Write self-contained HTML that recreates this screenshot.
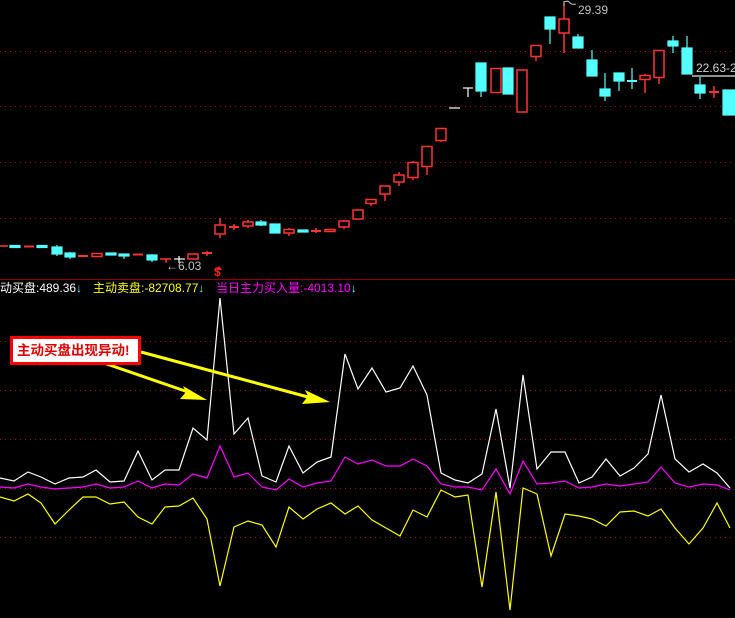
<!DOCTYPE html>
<html><head><meta charset="utf-8"><style>
html,body{margin:0;padding:0;background:#000;width:735px;height:618px;overflow:hidden}
svg{display:block}
text{font-family:"Liberation Sans","Noto Sans CJK SC",sans-serif}
</style></head><body>
<svg width="735" height="618" viewBox="0 0 735 618" xmlns="http://www.w3.org/2000/svg">
<g stroke="#a01010" stroke-width="1" stroke-dasharray="1 4">
<line x1="0" y1="51.5" x2="735" y2="51.5"/><line x1="0" y1="106.5" x2="735" y2="106.5"/>
<line x1="0" y1="162.5" x2="735" y2="162.5"/><line x1="0" y1="218.5" x2="735" y2="218.5"/>
<line x1="0" y1="341.5" x2="735" y2="341.5"/><line x1="0" y1="390.5" x2="735" y2="390.5"/>
<line x1="0" y1="439.5" x2="735" y2="439.5"/><line x1="0" y1="488.5" x2="735" y2="488.5"/>
<line x1="0" y1="537.5" x2="735" y2="537.5"/>
</g>
<line x1="0" y1="279.5" x2="735" y2="279.5" stroke="#900000"/>
<g stroke="#ff3232" stroke-width="1.5" fill="#000">
<line x1="-2" y1="246" x2="8" y2="246"/>
<line x1="24" y1="246.5" x2="34" y2="246.5" stroke-width="2"/>
<line x1="78" y1="256" x2="88" y2="256" stroke-width="2"/>
<rect x="92" y="253.5" width="10" height="3"/>
<line x1="133" y1="254.5" x2="143" y2="254.5" stroke-width="2"/>
<line x1="166" y1="259" x2="166" y2="263"/><line x1="160" y1="259" x2="171" y2="259"/>
<rect x="188" y="254" width="10" height="5"/>
<line x1="202" y1="253" x2="212" y2="253" stroke-width="2"/><line x1="207" y1="251" x2="207" y2="256"/>
<line x1="220" y1="218" x2="220" y2="238"/><rect x="215" y="225" width="10" height="9"/>
<line x1="229" y1="227" x2="239" y2="227" stroke-width="2"/><line x1="234" y1="224" x2="234" y2="230"/>
<line x1="248" y1="220" x2="248" y2="228"/><rect x="243" y="222" width="10" height="4"/>
<line x1="289" y1="228" x2="289" y2="236"/><rect x="284" y="229.5" width="10" height="3.5"/>
<line x1="311" y1="231" x2="321" y2="231" stroke-width="2"/><line x1="316" y1="228" x2="316" y2="233"/>
<rect x="325" y="229.5" width="10" height="2"/>
<line x1="344" y1="220" x2="344" y2="229"/><rect x="339" y="221" width="10" height="6"/>
<rect x="353" y="210" width="10" height="9"/>
<line x1="371" y1="204" x2="371" y2="206"/><rect x="366" y="199.5" width="10" height="4"/>
<line x1="385" y1="194" x2="385" y2="201"/><rect x="380" y="186" width="10" height="8"/>
<line x1="399" y1="172" x2="399" y2="186"/><rect x="394" y="175" width="10" height="7"/>
<line x1="413" y1="161" x2="413" y2="180"/><rect x="408" y="162.5" width="10" height="15"/>
<line x1="427" y1="166" x2="427" y2="175"/><rect x="422" y="146.5" width="10" height="20"/>
<line x1="441" y1="140" x2="441" y2="142"/><rect x="436" y="128.5" width="10" height="12"/>
<rect x="491" y="68.5" width="10" height="24"/>
<rect x="517" y="70" width="10" height="42"/>
<line x1="536" y1="56" x2="536" y2="61"/><rect x="531" y="45.5" width="10" height="11"/>
<line x1="564" y1="3" x2="564" y2="53"/><rect x="559" y="19" width="10" height="14"/>
<line x1="645" y1="74" x2="645" y2="93"/><rect x="640" y="75.5" width="10" height="4"/>
<line x1="659" y1="77" x2="659" y2="84"/><rect x="654" y="50.5" width="10" height="27"/>
<line x1="709" y1="92" x2="719" y2="92" stroke-width="2"/><line x1="714" y1="86" x2="714" y2="98"/>
</g>
<g fill="#54ffff" stroke="#54ffff" stroke-width="1.2">
<rect x="10" y="245.5" width="10" height="2"/>
<rect x="37" y="245.5" width="10" height="2"/>
<rect x="52" y="247" width="10" height="7"/><line x1="57" y1="245" x2="57" y2="256"/>
<rect x="65" y="253" width="10" height="4"/><line x1="70" y1="252" x2="70" y2="259"/>
<rect x="106" y="253" width="10" height="2"/>
<rect x="119" y="254" width="10" height="2"/><line x1="124" y1="256" x2="124" y2="259"/>
<rect x="147" y="255" width="10" height="5"/><line x1="152" y1="254" x2="152" y2="262"/>
<rect x="256" y="222" width="10" height="3"/><line x1="261" y1="220" x2="261" y2="226"/>
<rect x="270" y="224" width="10" height="9"/>
<rect x="298" y="230" width="10" height="2"/>
<rect x="476" y="63" width="10" height="28"/><line x1="481" y1="91" x2="481" y2="97"/>
<rect x="503" y="68" width="10" height="26"/>
<rect x="545" y="17" width="10" height="12"/><line x1="550" y1="29" x2="550" y2="44"/>
<rect x="573" y="37" width="10" height="11"/><line x1="578" y1="34" x2="578" y2="37"/>
<rect x="587" y="60" width="10" height="16"/><line x1="592" y1="50" x2="592" y2="60"/>
<rect x="600" y="89" width="10" height="7"/><line x1="605" y1="73" x2="605" y2="101"/>
<rect x="614" y="73" width="10" height="8"/><line x1="619" y1="81" x2="619" y2="91"/>
<line x1="627" y1="81" x2="637" y2="81" stroke-width="2"/><line x1="632" y1="68" x2="632" y2="89"/>
<rect x="668" y="41" width="10" height="5"/><line x1="673" y1="36" x2="673" y2="53"/>
<rect x="682" y="48" width="10" height="26"/><line x1="687" y1="36" x2="687" y2="48"/>
<rect x="695" y="85" width="10" height="8"/><line x1="700" y1="77" x2="700" y2="99"/>
<rect x="723" y="90" width="12" height="25"/>
</g>
<g stroke="#fff" stroke-width="1.2">
<line x1="174" y1="259" x2="185" y2="259"/><line x1="179" y1="256" x2="179" y2="263"/>
<line x1="449" y1="108" x2="460" y2="108"/>
<line x1="463" y1="88" x2="473" y2="88"/><line x1="468" y1="88" x2="468" y2="97"/>
</g>
<text x="166" y="270" fill="#c0c0c0" font-size="12">←6.03</text>
<text x="214" y="276" fill="#ff2020" font-size="12" font-weight="bold">$</text>
<path d="M216 270 L219 266 L222 270Z" fill="#ff2020"/>
<path d="M564 1 L564 6 M564 2 Q568 0 570 3 Q572 5 576 4" stroke="#c0c0c0" fill="none"/>
<text x="578" y="14" fill="#c0c0c0" font-size="12">29.39</text>
<text x="696" y="72" fill="#d0d0d0" font-size="12">22.63-2</text>
<line x1="692" y1="76" x2="735" y2="76" stroke="#909090" stroke-width="2"/>
<text x="0" y="292" font-size="12"><tspan fill="#fff">动买盘:489.36</tspan><tspan fill="#54ffff">↓</tspan></text>
<text x="93" y="292" font-size="12"><tspan fill="#ffff00">主动卖盘:-82708.77</tspan><tspan fill="#54ffff">↓</tspan></text>
<text x="216" y="292" font-size="12"><tspan fill="#ff00ff">当日主力买入量:-4013.10</tspan><tspan fill="#54ffff">↓</tspan></text>
<g fill="none" stroke-width="1.2">
<polyline stroke="#fff" points="0,478 14,481 28,472 41,477 55,484 69,478 83,477 96,470 110,482 124,481 138,451 152,480 165,470 179,470 193,428 207,440 220,298 234,434 248,418 262,476 276,482 289,446 303,473 317,462 331,457 345,354 358,389 372,368 386,392 400,388 413,366 427,395 441,473 455,480 468,483 482,474 496,409 510,488 523,375 537,469 551,452 565,452 579,483 592,477 606,459 620,476 634,468 648,454 661,395 675,459 689,472 703,464 717,473 730,488"/>
<polyline stroke="#ff00ff" points="0,487 14,488 28,484 41,487 55,489 69,488 83,487 96,484 110,488 124,487 138,481 152,488 165,484 179,485 193,474 207,478 220,446 234,477 248,473 262,487 276,490 289,479 303,487 317,483 331,481 345,457 358,464 372,460 386,466 400,466 413,459 427,466 441,484 455,487 468,487 482,490 496,469 510,494 523,461 537,484 551,483 565,481 579,488 592,487 606,484 620,486 634,484 648,482 661,467 675,483 689,487 703,484 717,485 730,490"/>
<polyline stroke="#ffff00" points="0,497 14,501 28,494 41,503 55,524 69,510 83,497 96,497 110,504 124,502 138,517 152,524 165,507 179,506 193,498 207,519 220,586 234,527 248,521 262,525 276,547 289,507 303,519 317,509 331,503 345,514 358,506 372,520 386,528 400,536 413,510 427,517 441,490 455,497 468,495 482,587 496,492 510,610 523,488 537,494 551,556 565,514 579,516 592,519 606,526 620,512 634,511 648,516 661,509 675,528 689,544 703,528 717,503 730,528"/>
</g>
<g stroke="#ffff00" stroke-width="3" fill="#ffff00">
<line x1="101" y1="362" x2="188" y2="392"/>
<line x1="141" y1="352" x2="308" y2="397"/>
</g>
<path d="M207 400 L180 399 L186 392 L183 386 Z" fill="#ffff00"/>
<path d="M330 402 L302 404 L308 396 L305 390 Z" fill="#ffff00"/>
<rect x="11.5" y="337.5" width="128" height="26" fill="#fff" stroke="#ff0000" stroke-width="3"/>
<text x="17" y="355" fill="#e00000" font-size="13.5" font-weight="bold" font-family="'Noto Sans CJK SC',sans-serif">主动买盘出现异动!</text>
</svg>
</body></html>
